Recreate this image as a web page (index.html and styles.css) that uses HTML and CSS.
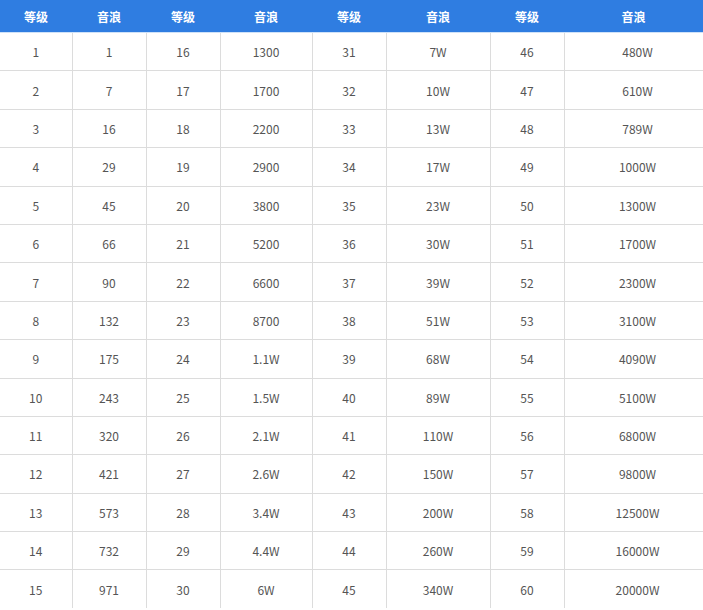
FILE: index.html
```html
<!DOCTYPE html>
<html lang="zh">
<head>
<meta charset="utf-8">
<link rel="stylesheet" href="styles.css">
</head>
<body>
<div class="wrap">
<table class="lv">
<colgroup>
<col class="c1"><col class="c2"><col class="c3"><col class="c4"><col class="c5"><col class="c6"><col class="c7"><col class="c8">
</colgroup>
<thead>
<tr><th>等级</th><th>音浪</th><th>等级</th><th>音浪</th><th>等级</th><th>音浪</th><th>等级</th><th>音浪</th></tr>
</thead>
<tbody>
<tr><td>1</td><td>1</td><td>16</td><td>1300</td><td>31</td><td>7W</td><td>46</td><td>480W</td></tr>
<tr><td>2</td><td>7</td><td>17</td><td>1700</td><td>32</td><td>10W</td><td>47</td><td>610W</td></tr>
<tr><td>3</td><td>16</td><td>18</td><td>2200</td><td>33</td><td>13W</td><td>48</td><td>789W</td></tr>
<tr><td>4</td><td>29</td><td>19</td><td>2900</td><td>34</td><td>17W</td><td>49</td><td>1000W</td></tr>
<tr><td>5</td><td>45</td><td>20</td><td>3800</td><td>35</td><td>23W</td><td>50</td><td>1300W</td></tr>
<tr><td>6</td><td>66</td><td>21</td><td>5200</td><td>36</td><td>30W</td><td>51</td><td>1700W</td></tr>
<tr><td>7</td><td>90</td><td>22</td><td>6600</td><td>37</td><td>39W</td><td>52</td><td>2300W</td></tr>
<tr><td>8</td><td>132</td><td>23</td><td>8700</td><td>38</td><td>51W</td><td>53</td><td>3100W</td></tr>
<tr><td>9</td><td>175</td><td>24</td><td>1.1W</td><td>39</td><td>68W</td><td>54</td><td>4090W</td></tr>
<tr><td>10</td><td>243</td><td>25</td><td>1.5W</td><td>40</td><td>89W</td><td>55</td><td>5100W</td></tr>
<tr><td>11</td><td>320</td><td>26</td><td>2.1W</td><td>41</td><td>110W</td><td>56</td><td>6800W</td></tr>
<tr><td>12</td><td>421</td><td>27</td><td>2.6W</td><td>42</td><td>150W</td><td>57</td><td>9800W</td></tr>
<tr><td>13</td><td>573</td><td>28</td><td>3.4W</td><td>43</td><td>200W</td><td>58</td><td>12500W</td></tr>
<tr><td>14</td><td>732</td><td>29</td><td>4.4W</td><td>44</td><td>260W</td><td>59</td><td>16000W</td></tr>
<tr><td>15</td><td>971</td><td>30</td><td>6W</td><td>45</td><td>340W</td><td>60</td><td>20000W</td></tr>
</tbody>
</table>
</div>
</body>
</html>
```

FILE: styles.css
```css
html, body {
  margin: 0;
  padding: 0;
  background: #ffffff;
  overflow: hidden;
}
.wrap {
  width: 703px;
  overflow: hidden;
}
.lv {
  width: 703px;
  table-layout: fixed;
  border-collapse: collapse;
  font-family: "Noto Sans CJK SC", "Noto Sans", sans-serif;
  font-size: 12px;
}
.c1 { width: 72px; }
.c2 { width: 74px; }
.c3 { width: 74px; }
.c4 { width: 92px; }
.c5 { width: 74px; }
.c6 { width: 104px; }
.c7 { width: 74px; }
.c8 { width: 139px; }
.lv th {
  background: #2f7de1;
  color: #ffffff;
  font-weight: bold;
  height: 32px;
  padding: 0;
  text-align: center;
  border-bottom: 1px solid #cfe2f8;
}
.lv td {
  height: 37.4px;
  padding: 0;
  text-align: center;
  color: #555555;
  border: 1px solid #dcdcdc;
}
.lv td:first-child { border-left: none; }
.lv td:last-child { padding-left: 8px; }
.lv tbody tr:last-child td { border-bottom: none; }
```
